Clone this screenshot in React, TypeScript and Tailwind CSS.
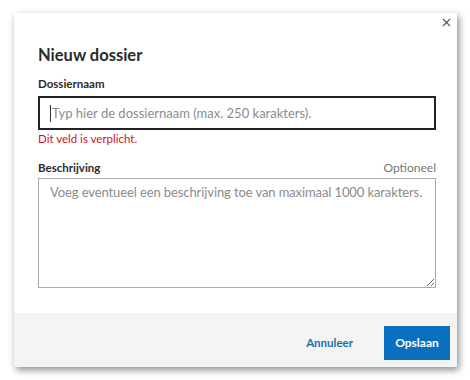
import { X } from "lucide-react";

export default function App() {
  return (
    <div className="w-[470px] h-[380px] bg-white pt-[13px] pl-[14px] font-['Lato',sans-serif]">
      <div className="relative w-[443px] h-[354px] bg-white flex flex-col shadow-[2px_3px_7px_rgba(0,0,0,0.45)]">
        <button className="absolute top-[1px] right-[3px] w-[16px] h-[16px] flex items-center justify-center text-[#555]">
          <X size={13} strokeWidth={2} />
        </button>

        <div className="flex-1 pl-[24px] pr-[21px] pt-[30px]">
          <h2 className="text-[16.5px] leading-[24px] font-bold text-[#2b2b2b]">Nieuw dossier</h2>

          <label className="block mt-[10px] text-[11.5px] leading-[14px] font-bold text-[#2b2b2b]">Dossiernaam</label>
          <div className="mt-[5px] h-[34px] border-2 border-[#222] flex items-center pl-[10px]">
            <span className="w-px h-[17px] bg-[#333]" />
            <input
              className="flex-1 h-full pl-[1px] outline-none text-[13px] text-[#333] placeholder:text-[#8c8c8c]"
              placeholder="Typ hier de dossiernaam (max. 250 karakters)."
            />
          </div>
          <div className="mt-[1px] text-[11.5px] leading-[15px] text-[#d0112b]">Dit veld is verplicht.</div>

          <div className="mt-[15px] flex items-center justify-between text-[11.5px] leading-[14px]">
            <span className="font-bold text-[#2b2b2b]">Beschrijving</span>
            <span className="text-[12px] text-[#777]">Optioneel</span>
          </div>
          <textarea
            className="block mt-[3px] w-full h-[110px] border border-[#aaa] pl-[11px] pr-[2px] pt-[3px] overflow-hidden outline-none text-[13px] tracking-[-0.1px] leading-[20px] text-[#333] placeholder:text-[#8c8c8c] resize"
            placeholder="Voeg eventueel een beschrijving toe van maximaal 1000 karakters."
          />
        </div>

        <div className="h-[54px] pt-[6px] bg-[#f4f4f4] flex items-center justify-end gap-[31px] pr-[7px]">
          <button className="text-[11.5px] font-bold text-[#1a6fb0]">Annuleer</button>
          <button className="w-[66px] h-[34px] bg-[#0b6fbf] text-white text-[12px] font-bold">Opslaan</button>
        </div>
      </div>
    </div>
  );
}
